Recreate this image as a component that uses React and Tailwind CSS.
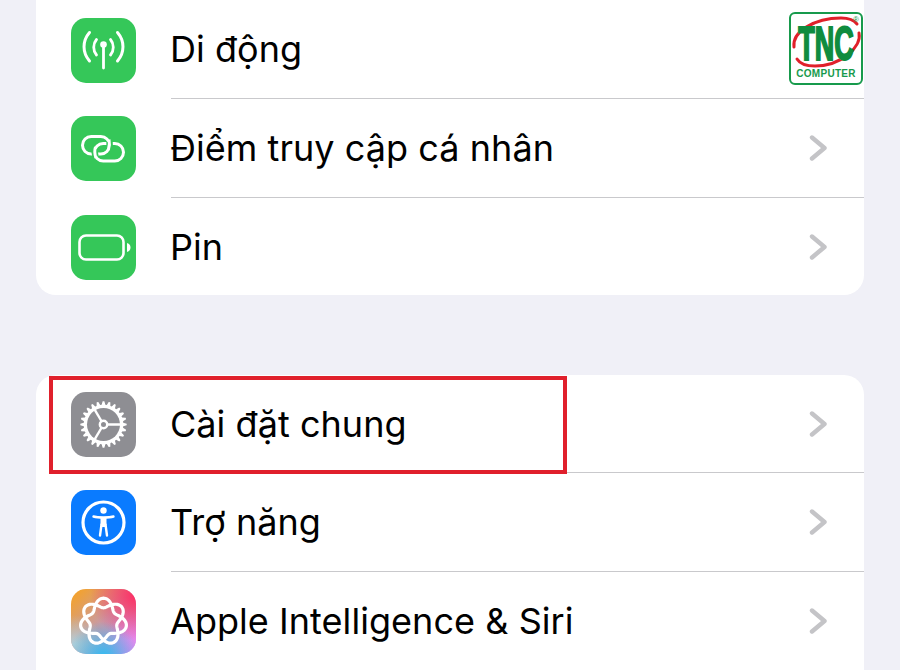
import React from "react";

const Tile = ({ children, className = "", nudge = false }) => (
  <div className={`w-[65px] h-[65px] rounded-[15px] shrink-0 overflow-hidden ${nudge ? "mt-px" : ""} ${className}`}>
    <svg viewBox="0 0 65 65" className="w-full h-full block" fill="none">{children}</svg>
  </div>
);

const Cellular = () => (
  <Tile nudge className="bg-[#35c759]">
    <g stroke="#fff" strokeLinecap="round" strokeWidth="2.8">
      <path d="M32.5 26v24" strokeWidth="2.800" />
      <path d="M25.500 21.500c-3.700 4.400-3.700 11 0 15.500" />
      <path d="M39.500 21.500c3.700 4.400 3.700 11 0 15.500" />
      <path d="M18.500 14.500c-7.300 8.500-7.300 20 0 28.500" strokeWidth="3" />
      <path d="M46.500 14.500c7.300 8.500 7.300 20 0 28.500" strokeWidth="3" />
    </g>
    <circle cx="32.5" cy="26.500" r="3.300" fill="#fff" />
  </Tile>
);

const Link = () => (
  <Tile className="bg-[#35c759]">
    <g stroke="#fff" strokeWidth="3">
      <rect x="11.500" y="20.500" width="27" height="17.500" rx="8.700" />
      <rect x="23.500" y="27.500" width="29" height="17.500" rx="8.700" />
    </g>
    <path d="M38.500 25.500Q39 28.500 38 33" stroke="#35c759" strokeWidth="6.500" />
    <path d="M38 23.500Q39.200 28.500 37.300 34" stroke="#fff" strokeWidth="3" />
    <path d="M24 32.500Q23 36 24.500 40.500" stroke="#35c759" strokeWidth="6.500" />
    <path d="M24.500 31Q22.800 36 25 42" stroke="#fff" strokeWidth="3" />
  </Tile>
);

const Battery = () => (
  <Tile nudge className="bg-[#35c759]">
    <rect x="8.500" y="20.500" width="44" height="24" rx="6.500" stroke="#fff" strokeWidth="2.600" />
    <path d="M56 28c2.500.8 3.500 2.500 3.500 4.500s-1 3.700-3.500 4.500z" fill="#fff" />
  </Tile>
);

const gearPath = (() => {
  const cx = 32.5, cy = 32.5, n = 24, ro = 23.2, ri = 19.8;
  let d = "";
  for (let i = 0; i < n; i++) {
    const a = (i / n) * Math.PI * 2;
    const w = (Math.PI * 2) / n;
    const pts = [
      [ri, a - w * 0.36],
      [ro, a - w * 0.14],
      [ro, a + w * 0.14],
      [ri, a + w * 0.36],
    ];
    pts.forEach(([r, t], j) => {
      d += `${i === 0 && j === 0 ? "M" : "L"}${(cx + r * Math.cos(t)).toFixed(2)} ${(cy + r * Math.sin(t)).toFixed(2)}`;
    });
  }
  return d + "Z";
})();

const Gear = () => (
  <Tile className="bg-[#8e8e93]">
    <path d={gearPath} fill="#fff" />
    <circle cx="32.5" cy="32.5" r="16.500" fill="#8e8e93" />
    <g stroke="#fff" strokeWidth="2.400">
      <path d="M36 32.500H49.500" />
      <path d="M30.700 29.500L23.800 17.800" />
      <path d="M30.700 35.500L23.800 47.200" />
    </g>
    <circle cx="32.5" cy="32.5" r="3.700" stroke="#fff" strokeWidth="2.400" />
  </Tile>
);

const Access = () => (
  <Tile className="bg-[#0a7bff]">
    <circle cx="32.5" cy="32.5" r="20.500" stroke="#fff" strokeWidth="3.200" />
    <circle cx="32.5" cy="20.500" r="3.200" fill="#fff" />
    <path d="M22.500 26.500C27 27.800 38 27.800 42.500 26.500" stroke="#fff" strokeWidth="2.400" strokeLinecap="round" />
    <path d="M29.500 27.500H35.500V34.500L34.500 37H30.500L29.500 34.500z" fill="#fff" />
    <path d="M30.500 34.500L29 45.500M34.500 34.500L36 45.500" stroke="#fff" strokeWidth="2.400" strokeLinecap="round" />
  </Tile>
);

const siriPath = (() => {
  const cx = 32.5, cy = 32.5, R = 18.5, A = 4.8;
  let d = "";
  for (let i = 0; i <= 280; i++) {
    const t = (i / 280) * Math.PI * 4;
    const r = R + A * Math.cos(3.5 * t);
    const a = t - Math.PI / 2;
    d += `${i ? "L" : "M"}${(cx + r * Math.cos(a)).toFixed(2)} ${(cy + r * Math.sin(a)).toFixed(2)}`;
  }
  return d + "Z";
})();

const Siri = () => (
  <Tile>
    <defs>
      <linearGradient id="sb" x1="0" y1="0" x2="1" y2="1">
        <stop offset="0" stopColor="#f9a31c" />
        <stop offset="0.5" stopColor="#c89aa6" />
        <stop offset="1" stopColor="#c58bf0" />
      </linearGradient>
      <radialGradient id="r1" cx="1" cy="0.1" r="0.7">
        <stop offset="0" stopColor="#ff2d62" />
        <stop offset="1" stopColor="#ff2d62" stopOpacity="0" />
      </radialGradient>
      <radialGradient id="r2" cx="0.5" cy="1.05" r="0.55">
        <stop offset="0" stopColor="#2dbdf2" />
        <stop offset="1" stopColor="#2dbdf2" stopOpacity="0" />
      </radialGradient>
      <radialGradient id="r3" cx="0.05" cy="0.85" r="0.45">
        <stop offset="0" stopColor="#b5cfd8" />
        <stop offset="1" stopColor="#b5cfd8" stopOpacity="0" />
      </radialGradient>
      <radialGradient id="r4" cx="1" cy="0.75" r="0.45">
        <stop offset="0" stopColor="#e58af0" />
        <stop offset="1" stopColor="#e58af0" stopOpacity="0" />
      </radialGradient>
    </defs>
    <rect width="65" height="65" fill="url(#sb)" />
    <rect width="65" height="65" fill="url(#r3)" />
    <rect width="65" height="65" fill="url(#r4)" />
    <rect width="65" height="65" fill="url(#r1)" />
    <rect width="65" height="65" fill="url(#r2)" />
    <path d={siriPath} stroke="#fff" strokeWidth="3.200" strokeLinejoin="round" />
  </Tile>
);

const Chevron = () => (
  <svg width="19" height="26" viewBox="0 0 19 26" fill="none" className="shrink-0">
    <path d="M3 2.500L15.500 13 3 23.500" stroke="#c4c4c7" strokeWidth="4.400" strokeLinecap="round" strokeLinejoin="round" />
  </svg>
);

const Row = ({ icon, label, last, height }) => (
  <div className={`flex items-center pl-[35px] ${height}`}>
    {icon}
    <div className={`ml-[35px] flex-1 h-full flex items-center justify-between pr-[36px] ${last ? "" : "border-b border-[#c9c9cc]"}`}>
      <span className="-ml-px text-[36px] leading-none text-black tracking-[0.05px]">{label}</span>
      <Chevron />
    </div>
  </div>
);

const Logo = () => (
  <div className="absolute left-[789px] top-[12px] w-[74px] h-[73px] rounded-[6px] bg-white border-2 border-[#179a4c]">
    <svg viewBox="0 0 74 73" className="absolute -left-[2px] -top-[2px] w-[74px] h-[73px]" fill="none">
      <path d="M5 35C3 20 25 6 52 6c8 0 13 2 16 6" stroke="#e0202a" strokeWidth="3" strokeLinecap="round" />
      <path d="M70 21c3 14-18 33-44 33-9 0-15-2-18-7" stroke="#e0202a" strokeWidth="3" strokeLinecap="round" />
      <text transform="translate(37 48) scale(1 1.800)" textAnchor="middle" fontFamily="'Liberation Sans', sans-serif" fontWeight="700" fontSize="27" fill="#0f8c3e" stroke="#0f8c3e" strokeWidth="1.200">TNC</text>
      <text x="37" y="65" textAnchor="middle" fontFamily="'Liberation Sans', sans-serif" fontWeight="700" fontSize="10" fill="#179a4c" letterSpacing="0.300">COMPUTER</text>
      <text x="67" y="10" textAnchor="middle" fontFamily="'Liberation Sans', sans-serif" fontSize="8" fill="#179a4c">®</text>
    </svg>
  </div>
);

export default function App() {
  return (
    <div className="relative w-[900px] h-[670px] overflow-hidden bg-[#f0f0f7] px-[36px]" style={{ fontFamily: "Inter, 'Noto Sans', sans-serif" }}>
      <div className="bg-white rounded-b-[20px]">
        <Row height="h-[99px]" icon={<Cellular />} label="Di động" />
        <Row height="h-[99px]" icon={<Link />} label="Điểm truy cập cá nhân" />
        <Row height="h-[97px]" icon={<Battery />} label="Pin" last />
      </div>
      <div className="mt-[80px] bg-white rounded-t-[20px]">
        <Row height="h-[98px]" icon={<Gear />} label="Cài đặt chung" />
        <Row height="h-[99px]" icon={<Access />} label="Trợ năng" />
        <Row height="h-[99px]" icon={<Siri />} label="Apple Intelligence & Siri" />
      </div>
      <Logo />
      <div className="absolute left-[49px] top-[376px] w-[518px] h-[98px] border-[4px] border-[#e0202c]" />
    </div>
  );
}
